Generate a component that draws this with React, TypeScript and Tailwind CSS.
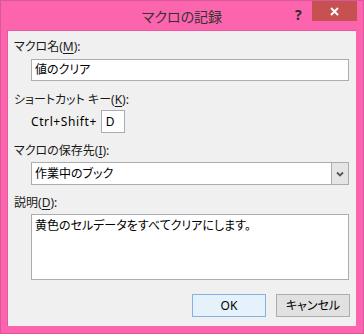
import React from 'react';

const font = "font-['Noto_Sans','Noto_Sans_CJK_JP',sans-serif] [font-feature-settings:'palt']";

function Label({ text, mnemonic }: { text: string; mnemonic: string }) {
  return (
    <div className="h-4 leading-4 text-[12px] text-[#1a1a1a] pl-[6px]">
      {text}(<span className="underline underline-offset-2">{mnemonic}</span>):
    </div>
  );
}

export default function App() {
  return (
    <div className={`${font} w-[364px] h-[334px] bg-[#fc65ad] border border-[#d9579a] flex flex-col`}>
      {/* title bar */}
      <div className="relative h-[29px] flex items-center justify-center">
        <span className="text-[14px] text-[#333] mt-[2px]">マクロの記録</span>
        <span className="absolute left-[294px] top-[3px] text-[14px] font-bold text-[#2a2a2a]">?</span>
        <div className="absolute left-[311px] top-0 w-[45px] h-[20px] bg-[#c75050] flex items-center justify-center">
          <svg width="9" height="9" viewBox="0 0 9 9">
            <path d="M1 1 L8 8 M8 1 L1 8" stroke="#fff" strokeWidth="2" />
          </svg>
        </div>
      </div>

      {/* client area */}
      <div className="ml-[6px] w-[349px] h-[296px] bg-[#f0f0f0] border-l border-t border-[#e9589f] flex flex-col">
        <div className="mt-[8px]">
          <Label text="マクロ名" mnemonic="M" />
        </div>
        <div className="ml-[23px] mt-[4px] w-[318px] h-[22px] bg-white border border-[#abadb3] flex items-center pl-[3px] text-[12px] text-black">
          値のクリア
        </div>

        <div className="mt-[11px]">
          <Label text="ショートカット キー" mnemonic="K" />
        </div>
        <div className="mt-[2px] ml-[23px] flex items-center h-[23px] text-[12px] text-black">
          <span className="tracking-[0.6px]">Ctrl+Shift+</span>
          <div className="ml-[4px] w-[24px] h-[23px] bg-white border border-[#abadb3] flex items-center pl-[4px]">D</div>
        </div>

        <div className="mt-[10px]">
          <Label text="マクロの保存先" mnemonic="I" />
        </div>
        <div className="ml-[23px] mt-[3px] w-[318px] h-[23px] bg-white border border-[#acacac] flex items-stretch text-[12px] text-black">
          <div className="flex-1 flex items-center pl-[3px]">作業中のブック</div>
          <div className="w-[17px] bg-[#e5e5e5] border-l border-[#acacac] flex items-center justify-center">
            <svg width="8" height="6" viewBox="0 0 8 6">
              <path d="M1 1.5 L4 4.5 L7 1.5" stroke="#555" strokeWidth="1.8" fill="none" />
            </svg>
          </div>
        </div>

        <div className="mt-[10px]">
          <Label text="説明" mnemonic="D" />
        </div>
        <div className="ml-[23px] mt-[3px] w-[318px] h-[66px] bg-white border border-[#abadb3] pl-[3px] pt-[3px] text-[12px] leading-4 text-black">
          黄色のセルデータをすべてクリアにします。
        </div>

        <div className="mt-[14px] flex justify-end gap-[10px] pr-[6px]">
          <button className="w-[74px] h-[23px] bg-[#e5f1fb] border border-[#7eb4ea] text-[12px] text-black">OK</button>
          <button className="w-[74px] h-[23px] bg-[#e1e1e1] border border-[#adadad] text-[12px] text-black">キャンセル</button>
        </div>
      </div>
    </div>
  );
}
